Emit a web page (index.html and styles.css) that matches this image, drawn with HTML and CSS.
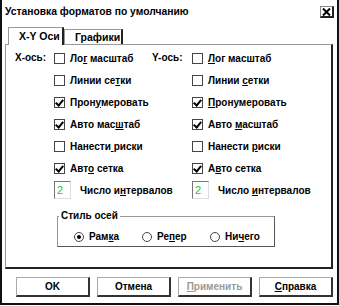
FILE: index.html
```html
<!DOCTYPE html>
<html lang="ru">
<head>
<meta charset="utf-8">
<link rel="stylesheet" href="styles.css">
</head>
<body>
<div class="window">
  <div class="titlebar">
    <span class="title">Установка форматов по умолчанию</span>
    <span class="close"><svg width="9" height="8" viewBox="0 0 9 8"><path d="M1 0.5 L8 7.5 M8 0.5 L1 7.5" stroke="#000" stroke-width="2"/></svg></span>
  </div>
  <div class="tabs">
    <div class="tab active">X-Y Оси</div>
    <div class="tab">Графики</div>
  </div>
  <div class="panel">
    <div class="grid">
      <div class="axis">X-ось:</div>
      <div class="chk"><span class="box"></span><span>Ло<u>г</u> масштаб</span></div>
      <div class="axis">Y-ось:</div>
      <div class="chk"><span class="box"></span><span><u>Л</u>ог масштаб</span></div>

      <div></div>
      <div class="chk"><span class="box"></span><span>Линии се<u>т</u>ки</span></div>
      <div></div>
      <div class="chk"><span class="box"></span><span>Линии <u>с</u>етки</span></div>

      <div></div>
      <div class="chk"><span class="box on"></span><span>Прон<u>у</u>меровать</span></div>
      <div></div>
      <div class="chk"><span class="box on"></span><span><u>П</u>ронумеровать</span></div>

      <div></div>
      <div class="chk"><span class="box on"></span><span>Авто мас<u>ш</u>таб</span></div>
      <div></div>
      <div class="chk"><span class="box on"></span><span>Авто <u>м</u>асштаб</span></div>

      <div></div>
      <div class="chk"><span class="box"></span><span>Нанести<u> </u>риски</span></div>
      <div></div>
      <div class="chk"><span class="box"></span><span>Нанести <u>р</u>иски</span></div>

      <div></div>
      <div class="chk"><span class="box on"></span><span>Авт<u>о</u> сетка</span></div>
      <div></div>
      <div class="chk"><span class="box on"></span><span>А<u>в</u>то сетка</span></div>

      <div></div>
      <div class="spin"><span class="field">2</span><span>Число и<u>н</u>тервалов</span></div>
      <div></div>
      <div class="spin"><span class="field">2</span><span>Число <u>и</u>нтервалов</span></div>
    </div>
    <fieldset class="group">
      <legend>Стиль осей</legend>
      <div class="radios">
        <div class="radio r1"><span class="dot on"></span><span>Рам<u>к</u>а</span></div>
        <div class="radio r2"><span class="dot"></span><span>Ре<u>п</u>ер</span></div>
        <div class="radio r3"><span class="dot"></span><span>Ни<u>ч</u>его</span></div>
      </div>
    </fieldset>
  </div>
  <div class="buttons">
    <div class="btn">OK</div>
    <div class="btn">Отмена</div>
    <div class="btn disabled"><u>П</u>рименить</div>
    <div class="btn"><u>С</u>правка</div>
  </div>
</div>
</body>
</html>
```
FILE: styles.css
```css
* { box-sizing: border-box; }
html, body { margin: 0; padding: 0; background: #fff; }
body {
  width: 339px;
  height: 306px;
  font-family: "Liberation Sans", Arial, sans-serif;
  font-weight: bold;
  font-size: 10px;
  color: #000;
  white-space: nowrap;
}
u { text-decoration: underline; text-underline-offset: 1px; }
.window {
  width: 339px;
  height: 305px;
  border-left: 2px solid #111;
  border-right: 2px solid #111;
  border-bottom: 2px solid #111;
  display: flex;
  flex-direction: column;
}
.titlebar {
  height: 27px;
  display: flex;
  align-items: flex-start;
  justify-content: space-between;
  padding: 6px 3px 0 3px;
}
.title { line-height: 12px; font-size: 10.3px; }
.close {
  width: 14px;
  height: 12px;
  border: 1px solid #888;
  border-right: 2px solid #222;
  border-bottom: 2px solid #222;
  display: flex;
  align-items: center;
  justify-content: center;
}
.tabs {
  display: flex;
  align-items: flex-end;
  height: 17px;
  padding-left: 6px;
  position: relative;
  z-index: 1;
}
.tab {
  height: 15px;
  padding: 0 0 0 10px;
  border-top: 1px solid #999;
  border-left: 1px solid #999;
  border-right: 2px solid #222;
  line-height: 14px;
  font-size: 10.5px;
  background: #fff;
}
.tab.active {
  height: 18px;
  margin-bottom: -1px;
  padding-top: 1px;
  width: 56px;
}
.tab:not(.active) { width: 59px; }
.panel {
  margin: 0 4px 0 3px;
  height: 225px;
  border-left: 1px solid #999;
  border-top: 1px solid #999;
  border-right: 2px solid #222;
  border-bottom: 2px solid #222;
  padding: 2px 0 0 9px;
}
.grid {
  display: grid;
  grid-template-columns: 39px 98px 40px 1fr;
  grid-auto-rows: 22px;
  align-items: center;
}
.axis { line-height: 14px; }
.chk, .spin {
  display: flex;
  align-items: center;
  gap: 5px;
}
.box {
  width: 11px;
  height: 11px;
  border: 1px solid #444;
  background: #fff;
  position: relative;
  flex: none;
}
.box.on::after {
  content: "";
  position: absolute;
  left: 2px;
  top: 0px;
  width: 3px;
  height: 6px;
  border-right: 2px solid #000;
  border-bottom: 2px solid #000;
  transform: rotate(40deg);
}
.spin { gap: 9px; }
.field {
  width: 17px;
  height: 18px;
  border-top: 1px solid #777;
  border-left: 1px solid #777;
  border-right: 1px solid #ddd;
  border-bottom: 1px solid #ddd;
  color: #2bbf2b;
  font-weight: normal;
  font-size: 11px;
  padding-left: 2px;
  line-height: 16px;
  flex: none;
}
.group {
  margin: 9px 0 0 42px;
  width: 218px;
  height: 37px;
  border: 1px solid #999;
  border-right-color: #555;
  border-bottom-color: #555;
  padding: 0;
}
.group legend {
  padding: 0 2px;
  margin-left: 1px;
  line-height: 12px;
}
.radios {
  display: flex;
  padding: 9px 0 0 16px;
}
.radio {
  display: flex;
  align-items: center;
  gap: 5px;
}
.r1 { width: 68px; }
.r2 { width: 68px; }
.dot {
  width: 10px;
  height: 10px;
  border-radius: 50%;
  border: 1px solid #444;
  position: relative;
  flex: none;
}
.dot.on::after {
  content: "";
  position: absolute;
  left: 2px;
  top: 2px;
  width: 4px;
  height: 4px;
  border-radius: 50%;
  background: #000;
}
.buttons {
  display: flex;
  gap: 7px;
  padding: 8px 0 0 14px;
}
.btn {
  width: 74px;
  height: 20px;
  border-top: 1px solid #aaa;
  border-left: 1px solid #aaa;
  border-right: 2px solid #333;
  border-bottom: 2px solid #333;
  display: flex;
  align-items: center;
  justify-content: center;
}
.btn.disabled { color: #9a9a9a; }
```
